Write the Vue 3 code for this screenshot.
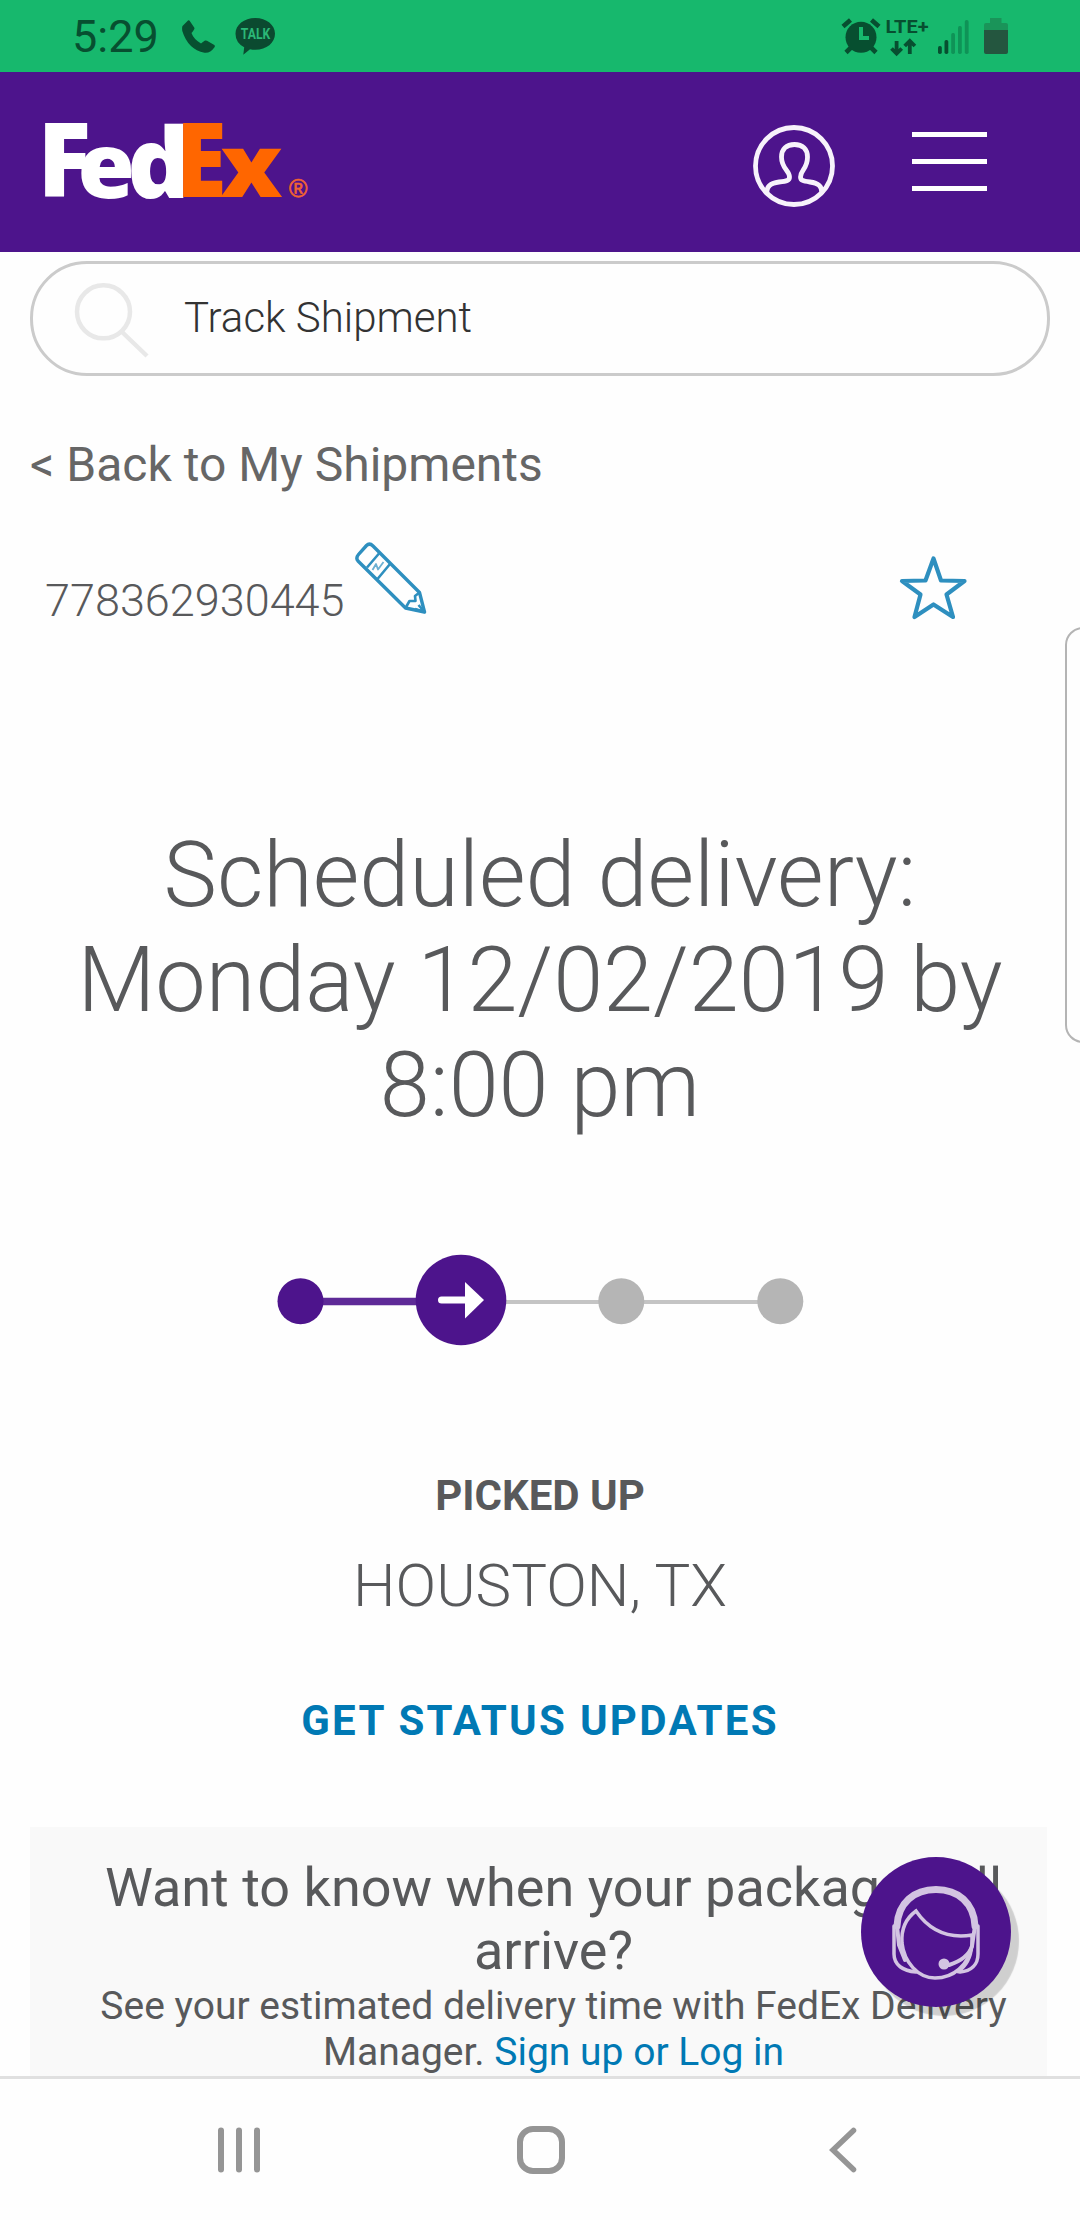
<script setup>
const signalBars = [
  { x: 938, y: 46, strong: true },
  { x: 944.5, y: 40, strong: true },
  { x: 951.2, y: 33, strong: false },
  { x: 958, y: 26, strong: false },
  { x: 964.8, y: 20, strong: false },
]
</script>

<template>
  <div class="screen">
    <div class="status">
      <div class="status-left">
        <span class="time">5:29</span>
        <svg class="phone" width="34" height="34" viewBox="182 20 34 34">
          <path d="M182.5 26L188 20.5Q189 19.800 189.800 21L194.500 28Q194.500 29.500 191.500 33Q193.500 39 201 43.500Q203.500 41.500 205 40.500Q206 40.200 207 40.800L214.300 45Q215.300 46 214.500 47.200Q210 53.500 204.500 52.700Q188 49.500 182.300 31Q181.800 27.500 182.500 26Z" fill="#074f30" />
        </svg>
        <svg class="talk" width="42" height="40" viewBox="234 17 42 40">
          <path d="M255.300 18C266.500 18 275 25 275 33.700C275 42.700 266.500 49.700 255.300 49.700Q252.500 49.700 250 49.200L243.300 54.800L244.200 47.300Q235.500 42.500 235.500 33.700C235.500 25 244 18 255.300 18Z" fill="#0b4a30" />
          <text x="240.800" y="39.200" class="talk-text" textLength="29.400" lengthAdjust="spacingAndGlyphs">TALK</text>
        </svg>
      </div>
      <svg class="status-right" width="170" height="44" viewBox="840 15 170 44">
        <g stroke="#074f30" stroke-width="4.600" fill="none">
          <path d="M843 26.500L850.500 20M871.500 20L879 26.500M846 52.500L851 47.500M876 52.500L871 47.500" />
          <circle cx="861" cy="37.300" r="15.500" fill="#074f30" stroke="none" />
          <path d="M861 27V38H869" stroke="#17b86d" stroke-width="4" />
        </g>
        <text x="885.500" y="32.700" class="lte" textLength="43" lengthAdjust="spacingAndGlyphs">LTE+</text>
        <path d="M896.600 41V53M891.500 48.500L896.600 53.500L901.700 48.500M909.800 54V41M904.700 46L909.800 41L914.900 46" stroke="#074f30" stroke-width="3.800" fill="none" />
        <rect v-for="b in signalBars" :key="b.x" :x="b.x" :y="b.y" width="3.800" :height="54 - b.y" rx="1.700" :fill="b.strong ? '#074f30' : '#0f9357'" />
        <path d="M990 18H1001.500V23H1006Q1008 23 1008 25V30H984V25Q984 23 986 23H990Z" fill="#1a9459" />
        <path d="M984 30H1008V52Q1008 54 1006 54H986Q984 54 984 52Z" fill="#24563f" />
      </svg>
    </div>

    <header class="header">
      <svg class="logo" width="290" height="180" viewBox="30 72 290 180">
        <g class="brand" fill="#fff">
          <text transform="translate(37.500 196.700) scale(.965 1)" font-size="103">F</text>
          <text transform="translate(77.400 198) scale(1.020 1)" font-size="91">e</text>
          <text transform="translate(127.200 197.500)" font-size="97">d</text>
        </g>
        <g class="brand" fill="#f60">
          <text transform="translate(176 196.700) scale(.895 1)" font-size="103">E</text>
          <text transform="translate(220.300 196.700) scale(1.150 1)" font-size="86">x</text>
        </g>
        <text x="289" y="197" class="reg">®</text>
      </svg>
      <div class="header-actions">
        <svg width="84" height="84" viewBox="752 124 84 84" fill="none" stroke="#f7f2fb" stroke-width="4.800">
          <circle cx="794" cy="166" r="38.500" />
          <path d="M767 194C766 186 771 183 779 182C787 181 789.500 180.500 789.500 177C789.500 170 781.500 169 781.500 157C781.500 149 786.500 144.500 794.500 144.500C802.500 144.500 807.500 149 807.500 157C807.500 169 800.500 170 800.500 177C800.500 180.500 803 181 810 182C818 183 822 186 822 193" />
        </svg>
        <div class="menu"><i></i><i></i><i></i></div>
      </div>
    </header>

    <main class="page">
      <div class="search">
        <svg width="78" height="78" viewBox="72 281 78 78" fill="none" stroke="#e8e8e8" stroke-width="4.500">
          <circle cx="103.500" cy="311.800" r="26.500" />
          <path d="M121 331L147 356" />
        </svg>
        <span class="search-text">Track Shipment</span>
      </div>

      <a class="back">&lt; Back to My Shipments</a>

      <div class="tracking">
        <span class="number">778362930445</span>
        <svg class="pencil" width="74" height="76" viewBox="354 540 74 76" fill="none" stroke="#2e8fbf" stroke-width="3.400" stroke-linejoin="round">
          <path d="M366.500 545.500Q369.500 542.500 373 546L419.500 592.500L424.500 612L405.500 608L358 561Q355.500 558 358.500 554.500Z" />
          <path d="M379 553.500L367 567.500M390 564L377.500 579" stroke-width="2.600" />
          <path d="M372.500 570L376 564L378 569.500L383.500 562" stroke-width="1.800" opacity=".7" />
          <path d="M419.500 592.500L415 596L415.500 601L409.500 601L405.500 608M418.500 605L424.500 612L415 609" stroke-width="2.600" />
        </svg>
        <svg class="star" width="72" height="74" viewBox="897 551 72 74" fill="none" stroke="#2e8fbf" stroke-width="4.200" stroke-linejoin="round">
          <path d="M933.500 558.500L941 580.500L964.500 581L946.500 594.500L953 617L933.500 604.500L914.500 617L920.500 594.500L902 581L925.500 580.500Z" />
        </svg>
      </div>

      <h1 class="headline">Scheduled delivery:<br>Monday 12/02/2019 by<br>8:00 pm</h1>

      <svg class="steps" width="530" height="96" viewBox="276 1252 530 96">
        <path d="M320 1301.500H420" stroke="#4d148c" stroke-width="7.500" opacity=".9" />
        <path d="M500 1302H760" stroke="#c4c4c4" stroke-width="4" />
        <circle cx="300.500" cy="1301.300" r="23" fill="#4d148c" />
        <circle cx="461" cy="1300" r="45.300" fill="#4d148c" />
        <circle cx="621.300" cy="1301.300" r="23" fill="#b5b5b5" />
        <circle cx="780.300" cy="1301.300" r="23" fill="#b5b5b5" />
        <path d="M441.500 1300H470" stroke="#fff" stroke-width="7" stroke-linecap="round" />
        <path d="M465 1282L484 1300L465 1318.500Z" fill="#fff" />
      </svg>

      <div class="state">PICKED UP</div>
      <div class="place">HOUSTON, TX</div>
      <a class="updates">GET STATUS UPDATES</a>

      <section class="card">
        <h2>Want to know when your package will<br>arrive?</h2>
        <p>See your estimated delivery time with FedEx Delivery<br>Manager. <a>Sign up or Log in</a></p>
      </section>
    </main>

    <nav class="nav">
      <svg width="44" height="46" viewBox="217 2127 44 46" stroke="#959595" stroke-width="6" stroke-linecap="round">
        <path d="M221 2130.500V2169.500M239 2130.500V2169.500M257 2130.500V2169.500" />
      </svg>
      <svg width="50" height="50" viewBox="516 2125 50 50" fill="none" stroke="#959595" stroke-width="6">
        <rect x="520" y="2129" width="42" height="42" rx="13" />
      </svg>
      <svg width="30" height="50" viewBox="828 2125 30 50" fill="none" stroke="#959595" stroke-width="5.500" stroke-linecap="round">
        <path d="M853.500 2130.500L833 2150L853.500 2169.500" />
      </svg>
    </nav>

    <div class="edge-panel"></div>
    <div class="chat">
      <svg width="150" height="150" viewBox="861 1857 150 150" fill="none" stroke="#d3c4e2" stroke-width="3.500" stroke-linecap="round">
        <path d="M897 1926C898 1903 914 1889.500 936 1889.500C958 1889.500 974 1903 975 1926" stroke-width="7" />
        <path d="M894 1926V1954C894 1965 903 1971 916 1972M978 1926V1954C978 1965 971 1971 960 1972" />
        <path d="M916 1911C905 1919 901 1929 902 1943C904 1962 918 1978 935 1978C954 1978 968 1965 972 1946V1935C947 1939 929 1930 916 1911Z" />
        <path d="M897 1926L899 1945L905 1960M975 1926L972 1946C970 1953 964 1960 949 1965" stroke-width="4" />
        <path d="M972 1946C971 1958 967 1966 958 1972" stroke-width="3" />
        <circle cx="944" cy="1964" r="4" fill="#d3c4e2" stroke-width="3" />
      </svg>
    </div>
  </div>
</template>

<style>
body {
  margin: 0;
}
</style>

<style scoped>
.screen {
  position: relative;
  display: flex;
  flex-direction: column;
  width: 1080px;
  height: 2220px;
  overflow: hidden;
  background: #fefefe;
  color: #58595b;
  font-family: Roboto, "Liberation Sans", sans-serif;
}
.screen svg {
  display: block;
  flex: none;
}
.status {
  display: flex;
  justify-content: space-between;
  height: 72px;
  flex: none;
  background: #17b86d;
}
.status-left {
  display: flex;
  padding-left: 72px;
}
.time {
  width: 110px;
  padding-top: 10px;
  font-size: 45px;
  line-height: 54px;
  color: #074f30;
}
.phone {
  margin-top: 20px;
}
.talk {
  margin: 17px 0 0 18px;
}
.talk-text {
  font-size: 14px;
  font-weight: 700;
  fill: #2bb877;
}
.status-right {
  margin: 15px 70px 0 0;
}
.lte {
  font-size: 19px;
  font-weight: 700;
  fill: #074f30;
}
.header {
  display: flex;
  justify-content: space-between;
  height: 180px;
  flex: none;
  background: #4d148c;
}
.logo {
  margin-left: 30px;
}
.brand {
  font-family: "Open Sans", "Noto Sans", sans-serif;
  font-weight: 900;
}
.reg {
  font-family: "Liberation Sans", sans-serif;
  font-size: 25px;
  fill: #f26430;
  stroke: #f26430;
  stroke-width: 0.6px;
}
.header-actions {
  display: flex;
  gap: 76px;
  padding: 52px 93px 0 0;
}
.menu {
  display: flex;
  flex-direction: column;
  gap: 22px;
  width: 75px;
  padding-top: 8px;
}
.menu i {
  height: 5px;
  background: #fff;
}
.page {
  display: flex;
  flex-direction: column;
  height: 1824px;
  flex: none;
  overflow: hidden;
}
.search {
  display: flex;
  align-items: flex-start;
  gap: 34px;
  box-sizing: border-box;
  flex: none;
  width: 1020px;
  height: 115px;
  margin: 9px 30px 0;
  padding: 17px 39px 0;
  border: 3px solid #cbcbcb;
  border-radius: 57px;
}
.search-text {
  padding-top: 12px;
  font-size: 42px;
  font-weight: 300;
  line-height: 50px;
  color: #333;
}
.back {
  flex: none;
  height: 56px;
  margin: 61px 0 0 30px;
  font-size: 48px;
  line-height: 56px;
  color: #666;
}
.tracking {
  display: flex;
  flex: none;
  height: 90px;
  margin-top: 47px;
  padding-left: 45px;
}
.number {
  width: 309px;
  padding-top: 34px;
  font-size: 45px;
  font-weight: 300;
  line-height: 54px;
}
.star {
  margin: 11px 0 0 469px;
}
.headline {
  flex: none;
  margin: 193px 0 0;
  font-size: 90px;
  font-weight: 300;
  line-height: 105px;
  text-align: center;
}
.steps {
  margin: 114px 0 0 276px;
}
.state {
  flex: none;
  margin-top: 123px;
  font-size: 42px;
  font-weight: 700;
  line-height: 50px;
  text-align: center;
}
.place {
  flex: none;
  margin-top: 30px;
  font-size: 60px;
  font-weight: 300;
  line-height: 70px;
  text-align: center;
}
.updates {
  flex: none;
  margin-top: 75px;
  font-size: 42px;
  font-weight: 700;
  line-height: 50px;
  letter-spacing: 2.3px;
  text-align: center;
  color: #0079b4;
}
.card {
  flex: none;
  width: 957px;
  height: 300px;
  margin: 81px 0 0 30px;
  padding: 29px 15px 0 45px;
  background: #f9f9f9;
  text-align: center;
  white-space: nowrap;
}
.card h2 {
  margin: 0;
  font-size: 54px;
  font-weight: 400;
  line-height: 63px;
}
.card p {
  margin: 1px 0 0;
  font-size: 39px;
  line-height: 46px;
}
.card a {
  color: #0079b4;
}
.nav {
  display: flex;
  align-items: center;
  box-sizing: border-box;
  flex: none;
  height: 144px;
  padding-left: 217px;
  border-top: 3px solid #e0e0e0;
}
.nav svg:nth-child(2) {
  margin-left: 255px;
}
.nav svg:nth-child(3) {
  margin-left: 262px;
}
.edge-panel {
  position: absolute;
  top: 627px;
  right: -25px;
  box-sizing: border-box;
  width: 40px;
  height: 416px;
  border: 2px solid #b4b4b4;
  border-radius: 18px;
  background: #fefefe;
}
.chat {
  position: absolute;
  left: 861px;
  top: 1857px;
  width: 150px;
  height: 150px;
  border-radius: 50%;
  background: #4d148c;
  box-shadow: 8px 9px 1px rgba(0, 0, 0, .17);
}
</style>
